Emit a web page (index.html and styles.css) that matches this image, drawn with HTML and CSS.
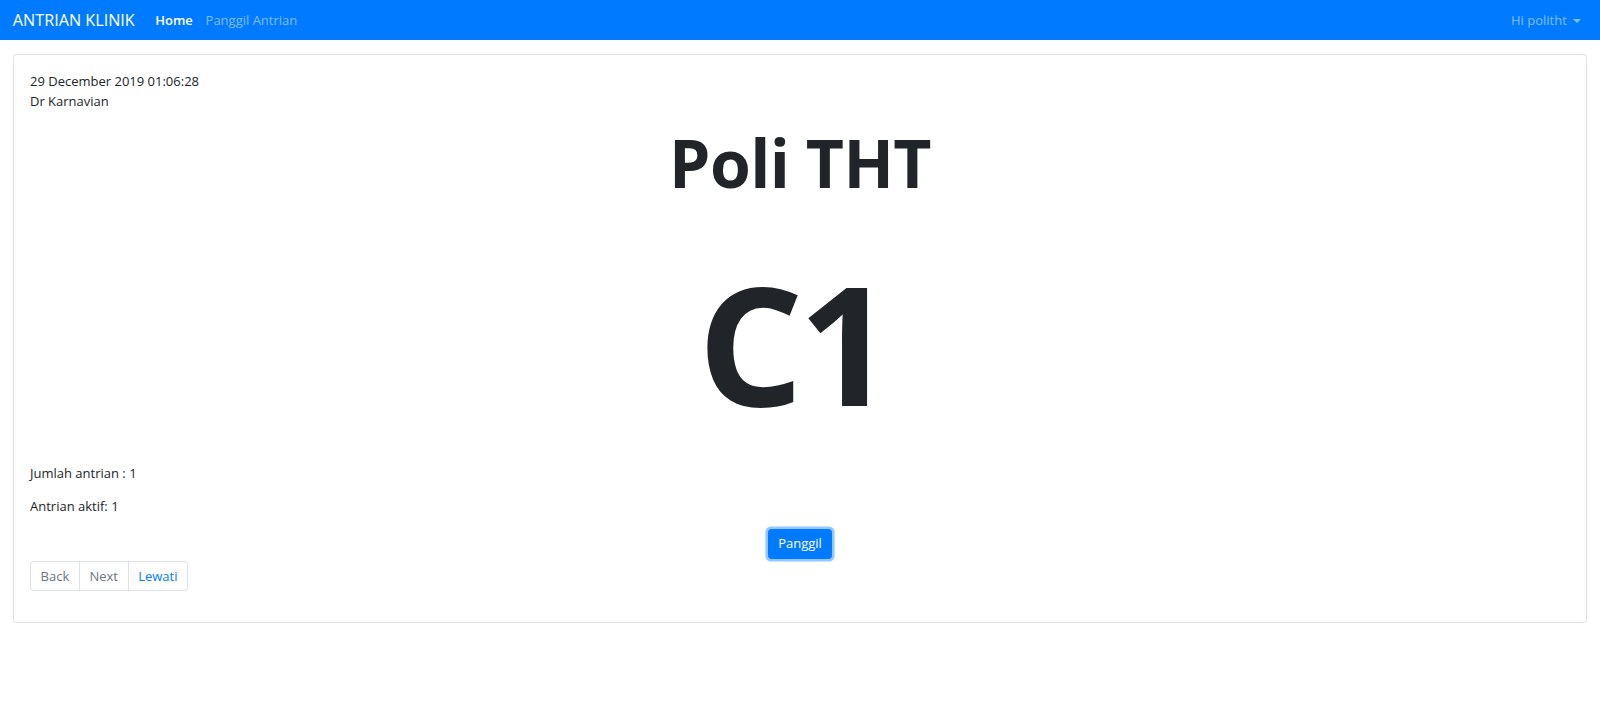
FILE: index.html
```html
<!DOCTYPE html>
<html lang="id">
  <head>
    <meta charset="UTF-8" />
    <meta name="viewport" content="width=device-width, initial-scale=1.0" />
    <title>Antrian Klinik</title>
    <link rel="stylesheet" href="styles.css">
  </head>
  <body>
    <nav class="navbar">
      <a class="navbar-brand" href="#">ANTRIAN KLINIK</a>
      <ul class="navbar-nav">
        <li><a class="nav-link active" href="#">Home</a></li>
        <li><a class="nav-link" href="#">Panggil Antrian</a></li>
      </ul>
      <a class="nav-link dropdown-toggle" href="#">Hi politht</a>
    </nav>

    <div class="container">
      <div class="card">
        <div class="card-body">
          <div class="info">
            <div id="tanggal">29 December 2019 01:06:28</div>
            <div>Dr Karnavian</div>
          </div>
          <h1 class="poli">Poli THT</h1>
          <h1 class="nomor">C1</h1>
          <p>Jumlah antrian : 1</p>
          <p>Antrian aktif: 1</p>
          <div class="actions">
            <button id="btnPanggil" class="btn-primary">Panggil</button>
          </div>
          <ul class="pagination">
            <li class="disabled"><a class="page-link" href="#">Back</a></li>
            <li class="disabled"><a class="page-link" href="#">Next</a></li>
            <li><a class="page-link" href="#">Lewati</a></li>
          </ul>
        </div>
      </div>
    </div>
  </body>
</html>
```

FILE: styles.css
```css
html,
body {
  margin: 0;
  padding: 0;
  font-family: "Open Sans", "Noto Sans", Arial, sans-serif;
  font-size: 13px;
  line-height: 20px;
  color: #212529;
  background-color: #fff;
}
a {
  text-decoration: none;
}
.navbar {
  display: flex;
  align-items: center;
  height: 40px;
  padding: 0 12.8px;
  background-color: #007bff;
}
.navbar-brand {
  color: #fff;
  font-size: 16.2px;
  line-height: 24px;
  margin-right: 14px;
}
.navbar-nav {
  display: flex;
  list-style: none;
  margin: 0;
  padding: 0;
  flex: 1;
}
.nav-link {
  display: block;
  padding: 6.4px;
  color: rgba(255, 255, 255, 0.5);
}
.nav-link.active {
  color: #fff;
  font-weight: 600;
}
.dropdown-toggle::after {
  content: "";
  display: inline-block;
  margin-left: 6px;
  vertical-align: 2px;
  border-top: 4px solid;
  border-right: 4px solid transparent;
  border-left: 4px solid transparent;
}
.container {
  padding: 14px 13px;
}
.card {
  border: 1px solid rgba(0, 0, 0, 0.125);
  border-radius: 3.2px;
}
.card-body {
  padding: 16px;
}
h1 {
  text-align: center;
  font-weight: 700;
  margin: 0;
}
.poli {
  font-size: 66px;
  line-height: 79px;
  margin-top: 12px;
  letter-spacing: -0.6px;
}
.nomor {
  font-size: 166px;
  line-height: 201px;
  margin-top: 40px;
  letter-spacing: -5px;
  padding-right: 14px;
}
p {
  margin: 0 0 12.8px;
}
.nomor + p {
  margin-top: 20px;
}
.actions {
  text-align: center;
}
.btn-primary {
  font-family: inherit;
  font-size: 13px;
  line-height: 19.2px;
  padding: 4.8px 9.6px;
  color: #fff;
  background-color: #007bff;
  border: 1px solid #007bff;
  border-radius: 3.2px;
  box-shadow: 0 0 0 2.6px rgba(38, 143, 255, 0.5);
  cursor: pointer;
}
.pagination {
  display: flex;
  list-style: none;
  padding: 0;
  margin: 1.3px 0 14.4px;
}
.page-link {
  display: block;
  padding: 6.4px 9.6px;
  line-height: 16px;
  color: #007bff;
  border: 1px solid #dee2e6;
  margin-left: -1px;
}
.pagination li:first-child .page-link {
  margin-left: 0;
  border-radius: 3.2px 0 0 3.2px;
}
.pagination li:last-child .page-link {
  border-radius: 0 3.2px 3.2px 0;
}
.pagination .disabled .page-link {
  color: #6c757d;
}
```
